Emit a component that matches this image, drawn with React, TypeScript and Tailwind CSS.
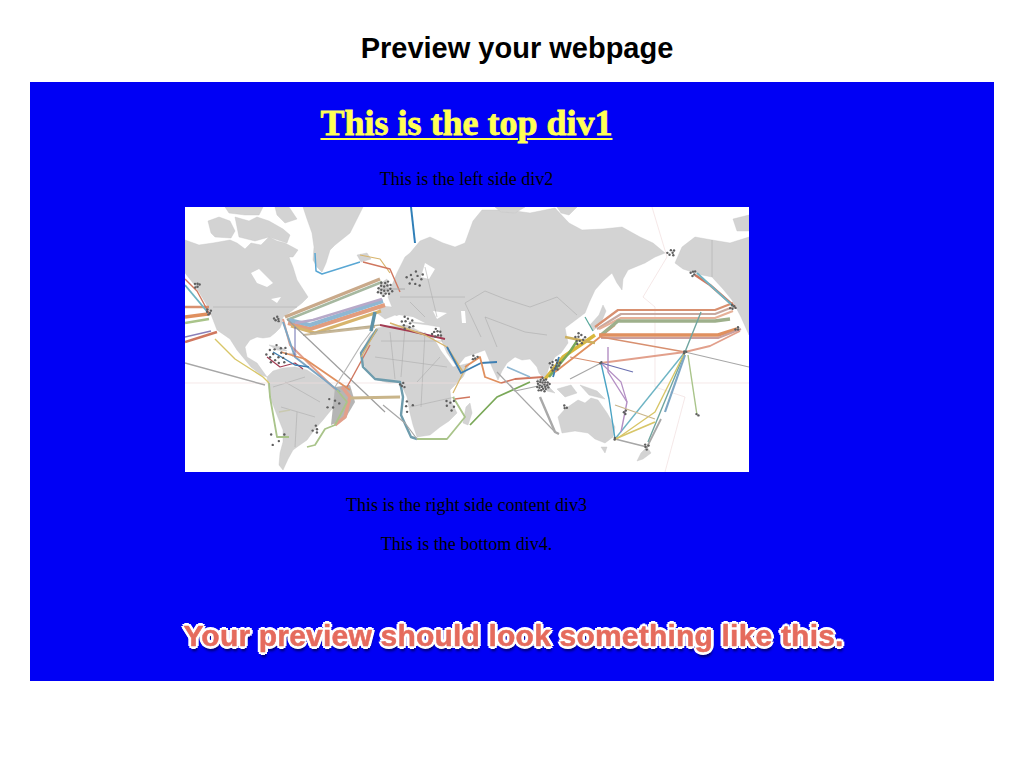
const land = [
  // north america
  "0,33 14,38 28,36 45,33 52,36 60,42 66,36 76,38 84,30 92,34 100,36 113,43 108,50 104,50 108,60 112,73 123,90 117,96 112,100 104,106 98,110 97,116 95,121 90,126 85,130 78,131 72,130 65,133 60,140 62,150 72,156 82,170 76,168 66,160 52,143 45,132 32,123 27,110 23,100 14,85 8,76 0,66",
  "23,14 34,10 45,14 50,24 46,31 30,30 26,26",
  "50,10 64,14 72,10 84,14 98,22 105,28 102,36 84,30 70,34 54,30",
  "40,0 78,0 74,8 60,8 44,6",
  "90,0 104,0 112,12 100,16 92,8",
  // greenland
  "118,0 178,0 172,12 165,26 150,38 145,43 141,56 137,65 132,60 128,53 129,40 127,26 122,12",
  // south america
  "82,170 88,164 98,161 110,160 122,163 136,172 152,183 153,190 152,196 142,208 138,213 130,222 122,233 112,240 108,243 103,252 98,263 94,258 95,246 98,235 98,223 92,208 85,190",
  // cuba, hispaniola
  "84,138 96,140 102,144 92,143",
  "104,146 112,147 108,150",
  // africa
  "178,143 184,130 192,121 205,119 222,118 236,125 248,130 256,144 268,160 285,156 278,170 265,183 266,194 272,206 264,214 255,220 245,228 232,230 228,218 225,206 222,190 215,175 204,176 192,173 183,165 178,156",
  "281,200 285,196 287,206 283,218 278,216",
  // eurasia
  "192,106 196,99 207,100 203,90 207,78 212,66 220,50 225,46 235,34 245,30 258,36 270,40 280,36 288,14 297,3 323,3 345,6 370,1 384,16 397,23 418,22 437,20 455,30 468,36 480,46 470,50 460,56 443,63 438,72 437,83 432,76 427,66 418,74 410,83 404,96 400,106 392,112 380,121 383,136 376,146 370,150 364,160 360,173 354,166 352,160 345,152 337,153 330,150 322,156 317,164 313,173 307,160 300,143 292,146 280,150 272,160 262,146 255,130 255,120 243,118 228,116 218,112 210,108 200,112",
  "310,0 340,0 330,6 316,5",
  "372,0 392,0 384,8 376,6",
  // british isles, iceland, japan, islands
  "196,76 202,72 205,84 198,90 193,84",
  "172,48 182,46 186,52 176,55",
  "405,118 414,108 418,98 421,104 416,116 408,124",
  "352,172 362,178 370,186 362,184",
  "372,182 386,178 392,186 380,190",
  "395,178 412,184 420,192 404,188",
  // alaska + canada, right edge
  "490,56 497,40 510,30 527,33 545,36 564,30 564,128 556,110 547,93 538,82 527,70 517,68 507,65 498,62",
  "548,12 564,8 564,24 552,24",
  // australia, new zealand
  "373,210 380,202 393,193 400,196 406,191 413,193 422,206 430,220 428,230 420,236 410,232 403,226 390,224 377,226",
  "416,240 422,240 420,246",
  "462,240 466,246 458,252 452,254 456,246",
];

const cables: [string, string, number][] = [
  // north atlantic bundle
  ["#c9a98a", "100,110 195,72", 3.5],
  ["#a6b8a0", "102,113 197,75", 2.5],
  ["#e29d7e", "103,116 125,122 200,98", 4],
  ["#8fb7d2", "104,113 125,118 198,94", 4],
  ["#d7b46c", "106,119 130,126 196,104", 3],
  ["#b8a9c9", "110,116 128,113 197,92", 2.5],
  ["#c8b89a", "118,128 190,120", 2],
  ["#59a7d4", "130,46 131,64 137,67 175,55", 1.5],
  ["#2f7fb8", "226,0 230,36", 2],
  ["#d7b46c", "175,48 195,52 205,66", 1.2],
  ["#d0775f", "178,55 205,62 215,85", 1.4],
  ["#aaaaaa", "195,82 220,82", 1],
  // caribbean and brazil
  ["#e2a08c", "98,112 105,138 150,182", 2],
  ["#9d9d9d", "102,112 200,205", 1.2],
  ["#7da6c4", "98,115 110,150 155,185", 2],
  ["#e0905f", "96,145 120,152 165,183", 1.8],
  ["#a23b52", "82,150 95,160 110,156 118,162", 1.2],
  ["#3d7fb3", "88,145 110,158 124,160", 1.4],
  ["#6a6fb0", "110,120 110,150", 1],
  ["#d8c668", "30,132 50,152 78,170 84,176", 1.4],
  ["#a7a7a7", "0,156 80,178", 1.4],
  ["#a9c48a", "84,176 85,190 92,230 104,230", 1.8],
  ["#c9c9b0", "94,205 105,203", 1.5],
  ["#e2a08c", "157,180 165,190 160,210 150,218", 3.5],
  ["#a9c48a", "152,183 162,195 150,218 140,222 130,238 122,240", 1.8],
  ["#d0775f", "162,180 185,138", 1.4],
  ["#b7b7b7", "150,180 176,138 188,122", 1.2],
  ["#c9b58a", "165,191 215,190", 3],
  ["#bcae8e", "125,126 195,118", 1.5],
  // africa coast
  ["#6e9cad", "192,122 176,146 178,160 190,172 215,175 218,190 216,208 226,230 232,232", 2.4],
  ["#a9c48a", "232,232 262,232 280,210 268,190", 1.8],
  ["#d7b46c", "192,122 176,150", 1.2],
  ["#5d93a8", "190,105 186,124", 3.5],
  ["#a7a7a7", "198,198 220,216 232,232", 1.2],
  ["#d7b46c", "268,186 282,158", 1.2],
  // mediterranean to red sea, asia
  ["#a23b52", "195,118 225,124 260,132", 1.8],
  ["#d7b46c", "205,116 240,128 262,140 278,165", 1.4],
  ["#3d7fb3", "262,140 276,166 296,156 312,155", 1.8],
  ["#e0905f", "280,160 295,150 300,170 316,176", 1.8],
  ["#d0775f", "316,176 330,172 358,170", 1.8],
  ["#7aa858", "285,218 312,190 345,175", 1.8],
  ["#a7a7a7", "312,165 370,225", 1.2],
  ["#d0775f", "270,192 285,190", 1.4],
  ["#a9a9a9", "355,190 370,225 374,227", 2.4],
  ["#8fb7d2", "322,160 345,170", 1.5],
  // east asia
  ["#d9b83c", "360,172 378,150 410,128", 3.5],
  ["#7aa858", "364,170 384,146 392,134", 2.5],
  ["#3d7fb3", "368,170 374,150", 1.8],
  ["#e0905f", "370,165 410,134 430,118", 1.8],
  ["#56a79a", "400,110 408,124", 1.2],
  ["#cdb05e", "380,130 410,136", 2.5],
  ["#d89070", "385,150 416,156", 1.2],
  // pacific bundle
  ["#d89070", "410,120 433,103 530,103 548,96", 2.2],
  ["#c8a9a0", "412,122 436,107 530,107 548,100", 2.2],
  ["#e6b098", "414,122 436,111 530,111 548,104", 2.2],
  ["#9eb08c", "416,128 433,114 530,114 545,112", 3.5],
  ["#e0905f", "414,128 533,128 552,122", 3.5],
  ["#c9a0a0", "416,131 533,131 556,122", 2.2],
  ["#d89070", "416,130 500,145", 1.4],
  ["#e2a08c", "416,156 500,145 525,139 555,124", 1.8],
  ["#a7a7a7", "500,145 564,160", 1.2],
  ["#d0775f", "510,68 525,78 550,100", 2.4],
  ["#6eb4c4", "512,66 549,100", 1.8],
  // south pacific
  ["#6fa5a0", "516,105 500,145 463,235", 1.4],
  ["#6eb4c4", "500,145 430,232", 1.4],
  ["#d8c668", "500,145 470,205 430,233", 1.4],
  ["#7da6c4", "500,148 480,205", 2.2],
  ["#a9c48a", "503,148 512,208", 1.4],
  ["#4aa3c4", "416,156 424,192 430,232", 1.4],
  ["#b48fc4", "423,140 423,165 442,195 436,225", 1.4],
  ["#b48fc4", "416,156 436,175 442,195", 1.2],
  ["#6a6fb0", "416,156 448,165", 1.2],
  ["#a7a7a7", "416,156 385,172", 1.2],
  ["#a7a7a7", "430,232 462,240 476,212", 1.8],
  ["#c9b58a", "430,198 470,212", 1.2],
  ["#d8c668", "430,232 470,215", 1.8],
  // americas west coast
  ["#e0905f", "0,110 23,107", 3.5],
  ["#a9c48a", "0,116 24,112", 2.5],
  ["#d89070", "0,100 24,100", 2.5],
  ["#d0775f", "0,135 32,125", 2.5],
  ["#8a7fb8", "0,130 26,124", 1.4],
  ["#6eb4c4", "0,78 25,108", 1.8],
  ["#d0775f", "0,72 12,84 25,108", 1.4],
  ["#a7a7a7", "358,178 330,184 325,178", 1.2],
];

// landing stations: [x, y, how many, spread]
const clusters = [
  [92, 112, 5, 3], [92, 148, 16, 11], [200, 82, 18, 8], [230, 72, 10, 9], [222, 116, 10, 7], [252, 126, 8, 5],
  [358, 178, 24, 7], [370, 158, 12, 6], [395, 132, 10, 6], [416, 156, 2, 1], [500, 145, 3, 1.5], [508, 66, 5, 3],
  [548, 100, 5, 3], [552, 122, 3, 2], [290, 150, 4, 3], [218, 178, 4, 3], [224, 200, 4, 6], [266, 198, 6, 6],
  [148, 196, 5, 7], [130, 222, 4, 4], [92, 230, 4, 9], [430, 232, 2, 1], [462, 240, 4, 3], [512, 208, 2, 1.5],
  [12, 78, 5, 3], [486, 46, 6, 4], [24, 105, 5, 3], [380, 200, 3, 2], [440, 205, 3, 2],
];

const hubs = clusters.flatMap(([x, y, n, r], c) =>
  Array.from({ length: n }, (_, i) => {
    const a = i * 2.4 + c;
    const d = r * Math.sqrt((i + 1) / n);
    return [x + Math.cos(a) * d, y + Math.sin(a) * d];
  })
);

function CableMap() {
  return (
    <svg viewBox="0 0 564 265" className="block h-[265px] w-[564px] bg-white blur-[0.5px]">
      <g fill="#d3d3d3" stroke="#c4c4c4" strokeWidth="0.4">
        {land.map((p, i) => (
          <polygon key={i} points={p} />
        ))}
      </g>
      {/* hudson bay, lakes, baltic, black sea, caspian */}
      <g fill="#ffffff">
        <polygon points="66,66 74,62 84,72 88,76 82,80 72,76" />
        <polygon points="240,56 250,62 244,72 236,70" />
        <polygon points="248,104 262,106 252,112" />
        <polygon points="276,104 280,104 281,116 277,116" />
        <polygon points="204,112 240,116 228,110 214,108" />
        <polygon points="86,92 96,90 92,96" />
      </g>
      {/* borders */}
      <g fill="none" stroke="#a8a8a8" strokeWidth="0.55">
        <path d="M28 100 L112 100 M196 134 L258 134 M220 120 L216 170 M240 125 L236 200 M190 150 L262 160 M225 200 L270 190 M205 125 L210 172 M255 150 L232 175" />
        <path d="M100 175 L135 195 M96 200 L130 210 M110 240 L112 205 M88 180 L120 170" />
        <path d="M280 96 L300 84 L320 92 L345 100 L372 90 L392 108 M300 110 L340 125 L362 128 M215 90 L280 90 M240 60 L252 110 M280 96 L296 130 M225 95 L240 110 M300 110 L312 140" />
        <path d="M527 33 L527 70" />
      </g>
      {/* date line and equator */}
      <g fill="none" stroke="#f0dede" strokeWidth="0.7">
        <path d="M0 176 L564 176" />
        <path d="M467 0 L482 50 L458 90 L470 100 L470 180 L500 190 L480 265" />
      </g>
      {/* fan of cables off brazil */}
      <polygon points="150,180 165,178 170,195 160,212 146,218" fill="#b5b5b5" />
      <g fill="none" strokeLinejoin="round">
        {cables.map(([color, pts, width], i) => (
          <polyline key={i} points={pts} stroke={color} strokeWidth={width} />
        ))}
      </g>
      <g fill="#5f5f5f">
        {hubs.map(([x, y], i) => (
          <circle key={i} cx={x} cy={y} r="1.2" />
        ))}
      </g>
    </svg>
  );
}

export default function App() {
  return (
    <div className="h-[768px] w-[1024px] overflow-hidden bg-white font-['Liberation_Sans',Arial,sans-serif]">
      <h1 className="h-[82px] pt-[31px] pl-[10px] text-center text-[29px] leading-[34px] font-bold text-black">
        Preview your webpage
      </h1>
      <div className="mx-[30px] flex h-[599px] flex-col bg-[#0000f5]">
        <div className="flex w-[873px] flex-col items-center font-['Liberation_Serif','Times_New_Roman',serif] text-[18px] text-black">
          <h2 className="mt-[20px] text-[36px] leading-[42px] font-bold text-[#ffff55] underline decoration-2 underline-offset-[3px] [-webkit-text-stroke:0.8px_#ffff55]">
            This is the top div1
          </h2>
          <p className="mt-[25px] leading-[20px]">This is the left side div2</p>
          <div className="mt-[18px]">
            <CableMap />
          </div>
          <p className="mt-[23px] leading-[20px]">This is the right side content div3</p>
          <p className="mt-[19px] leading-[20px]">This is the bottom div4.</p>
        </div>
        <p className="mt-[62px] pl-[3px] text-center text-[30px] leading-[40px] font-bold tracking-[0.2px] text-[#e56b5d] blur-[0.3px] [-webkit-text-stroke:0.5px_#e56b5d] [text-shadow:-3px_0_0_#fff,3px_0_0_#fff,0_-3px_0_#fff,0_3px_0_#fff,-2px_-2px_0_#fff,2px_-2px_0_#fff,-2px_2px_0_#fff,2px_2px_0_#fff,1px_5px_3px_#00005a]">
          Your preview should look something like this.
        </p>
      </div>
    </div>
  );
}
